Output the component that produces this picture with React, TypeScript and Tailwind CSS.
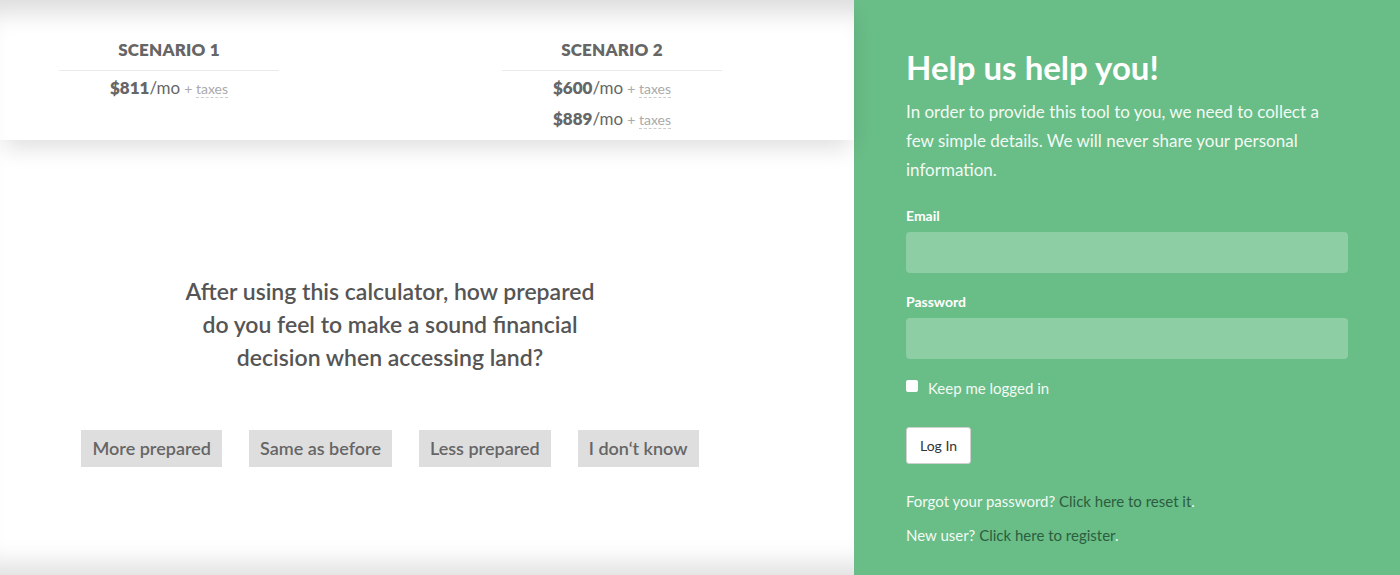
import React from 'react'

const scenarios = [
  { title: 'SCENARIO 1', prices: ['$811'] },
  { title: 'SCENARIO 2', prices: ['$600', '$889'] },
]

const answers = ['More prepared', 'Same as before', 'Less prepared', 'I don‘t know']

export default function App() {
  return (
    <div className="flex h-[575px] w-[1400px] overflow-hidden font-['Lato',sans-serif]">
      {/* left side: results + survey */}
      <div className="relative flex w-[854px] shrink-0 flex-col bg-white shadow-[inset_0_-30px_25px_-18px_rgba(0,0,0,0.12)]">
        <div className="relative z-10 flex h-[140px] shrink-0 gap-[223px] bg-white pl-[59px] pt-[38px] shadow-[inset_0_28px_22px_-14px_rgba(0,0,0,0.13),0_12px_22px_-4px_rgba(0,0,0,0.13)]">
          {scenarios.map((s) => (
            <div key={s.title} className="w-[220px] text-center text-[#666]">
              <div className="pb-[8px] text-[17px] font-extrabold leading-[24px] tracking-[0.2px]">{s.title}</div>
              <div className="border-t border-[#eaeaea] pt-[2px]">
                {s.prices.map((p) => (
                  <div key={p} className="text-[17px] leading-[30px]">
                    <span className="font-extrabold">{p}</span>
                    <span>/mo</span>
                    <span className="ml-[4px] text-[14px] text-[#aaa]">
                      +{' '}
                      <span className="border-b border-dashed border-[#ccc]">taxes</span>
                    </span>
                  </div>
                ))}
              </div>
            </div>
          ))}
        </div>

        <div className="flex w-[780px] flex-col items-center pt-[135px]">
          <p className="w-[430px] text-center text-[23px] font-semibold leading-[33px] text-[#555]">
            After using this calculator, how prepared do you feel to make a sound financial decision when accessing land?
          </p>
          <div className="mt-[56px] flex gap-[27px]">
            {answers.map((a) => (
              <button
                key={a}
                className="h-[37px] bg-[#dedede] px-[11px] text-[18px] font-semibold text-[#666]"
              >
                {a}
              </button>
            ))}
          </div>
        </div>
      </div>

      {/* right side: login */}
      <div className="flex flex-1 flex-col bg-[#69bd87] px-[52px] pt-[46px] text-white">
        <h1 className="text-[33px] font-bold leading-[42px]">Help us help you!</h1>
        <p className="mt-[9px] text-[17px] leading-[29px] text-[#f2faf4]">
          In order to provide this tool to you, we need to collect a few simple details. We will never share your personal information.
        </p>

        <label className="mt-[22px] text-[14px] font-bold leading-[20px]">Email</label>
        <input className="mt-[6px] h-[41px] rounded-[4px] bg-[#8ecea5] outline-none" />

        <label className="mt-[19px] text-[14px] font-bold leading-[20px]">Password</label>
        <input type="password" className="mt-[6px] h-[41px] rounded-[4px] bg-[#8ecea5] outline-none" />

        <label className="mt-[20px] flex items-center gap-[10px] text-[15px] leading-[18px] text-[#f2faf4]">
          <span className="mb-[4px] h-[12px] w-[12px] rounded-[2px] bg-white" />
          Keep me logged in
        </label>

        <div className="mt-[30px]">
          <button className="h-[37px] w-[65px] rounded-[3px] border border-[#d0d0d0] bg-white text-[14px] text-[#333]">
            Log In
          </button>
        </div>

        <p className="mt-[26px] text-[15px] leading-[22px] text-[#f2faf4]">
          Forgot your password? <a className="text-[#2c5e3e]">Click here to reset it</a>.
        </p>
        <p className="mt-[12px] text-[15px] leading-[22px] text-[#f2faf4]">
          New user? <a className="text-[#2c5e3e]">Click here to register</a>.
        </p>
      </div>
    </div>
  )
}
